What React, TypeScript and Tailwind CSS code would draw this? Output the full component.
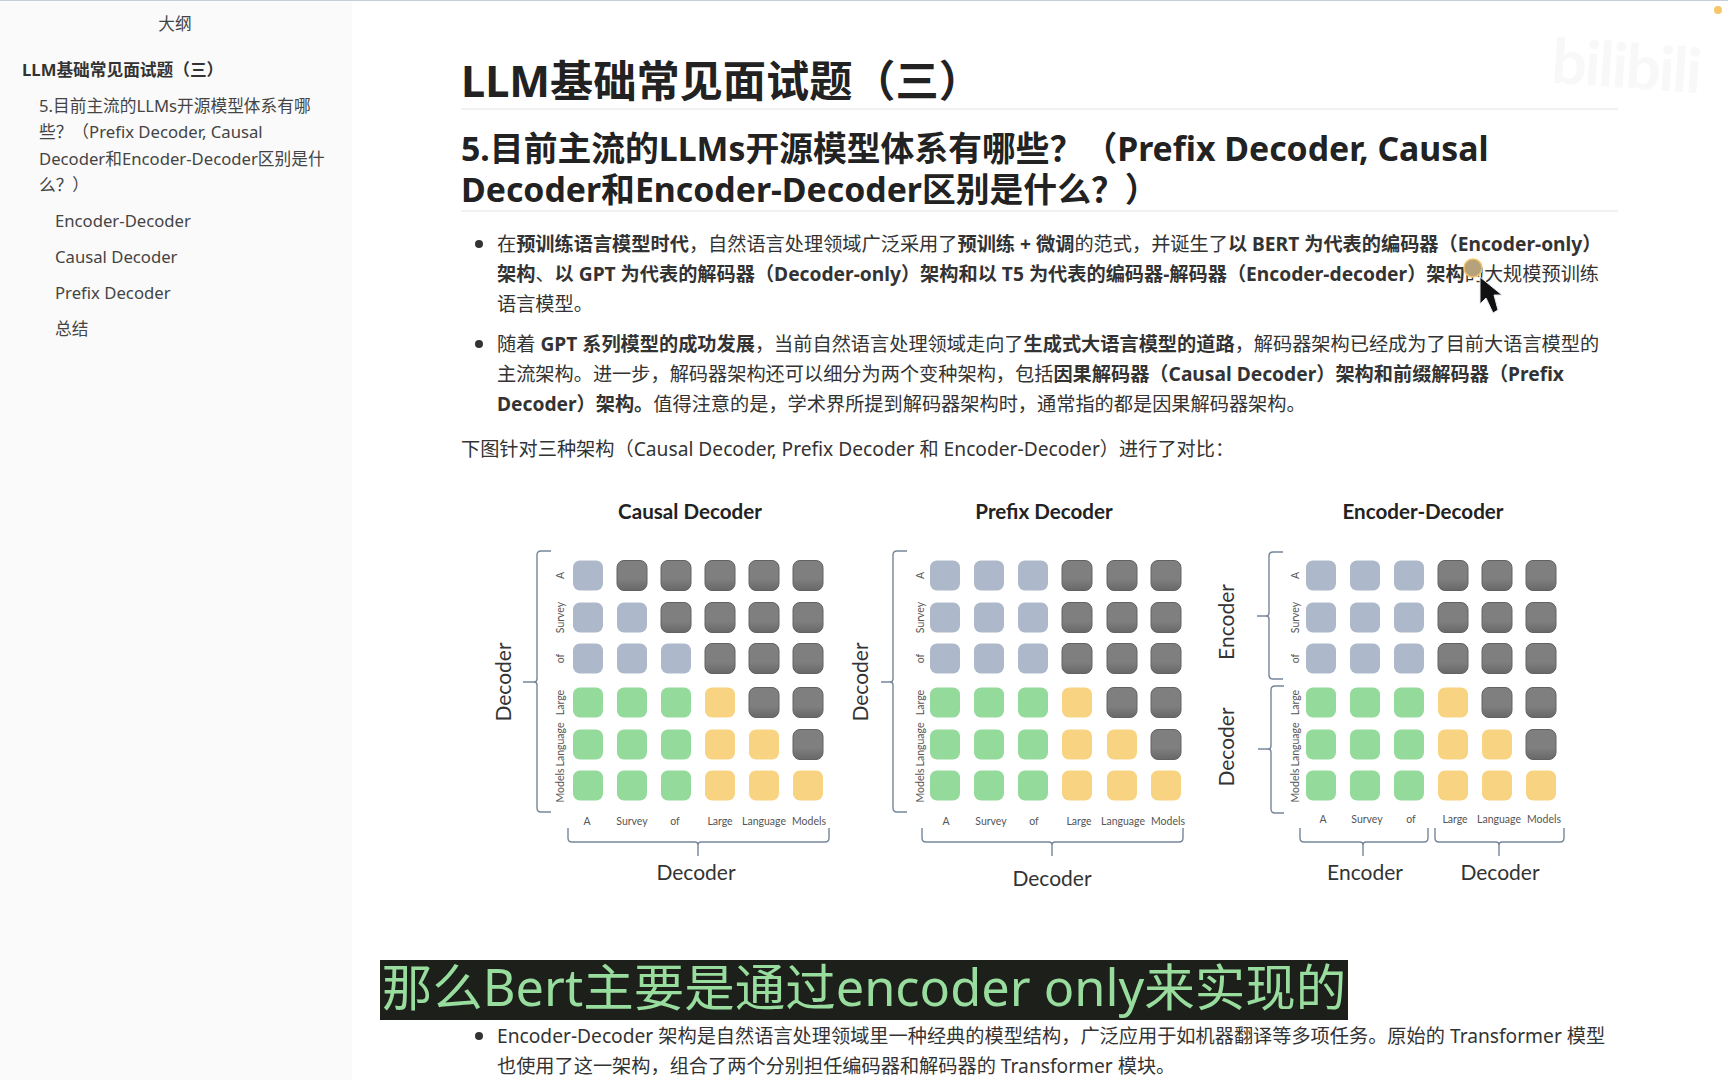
import React from 'react'

const words = ['A', 'Survey', 'of', 'Large', 'Language', 'Models']
const rowY = [560.5, 602.5, 643.5, 687.5, 729.5, 770.5]

const BLUE = '#adb9ca'
const GREEN = '#94da9a'
const YELLOW = '#f8d381'

const panels = [
  {
    title: 'Causal Decoder',
    titleX: 690,
    cols: [573, 617, 661, 705, 749, 793],
    rowLabelX: 561,
    colLabelX: [587, 632, 675, 720, 764, 809],
    colLabelY: 822,
    shared: false,
  },
  {
    title: 'Prefix Decoder',
    titleX: 1044,
    cols: [930, 974, 1018, 1062, 1107, 1151],
    rowLabelX: 921,
    colLabelX: [946, 991, 1034, 1079, 1123, 1168],
    colLabelY: 822,
    shared: true,
  },
  {
    title: 'Encoder-Decoder',
    titleX: 1423,
    cols: [1306, 1350, 1394, 1438, 1482, 1526],
    rowLabelX: 1296,
    colLabelX: [1323, 1367, 1411, 1455, 1499, 1544],
    colLabelY: 820,
    shared: true,
  },
]

const axisLabels = [
  { text: 'Decoder', x: 506, y: 682 },
  { text: 'Decoder', x: 863, y: 682 },
  { text: 'Encoder', x: 1229, y: 622 },
  { text: 'Decoder', x: 1229, y: 747 },
]

const bottomLabels = [
  { text: 'Decoder', x: 696, y: 875 },
  { text: 'Decoder', x: 1052, y: 881 },
  { text: 'Encoder', x: 1365, y: 875 },
  { text: 'Decoder', x: 1500, y: 875 },
]

const leftBraces = [
  { right: 551, left: 537, top: 551, bottom: 812, mid: 682, tip: 523 },
  { right: 907, left: 893, top: 551, bottom: 812, mid: 682, tip: 881 },
  { right: 1283, left: 1269, top: 552, bottom: 679, mid: 616, tip: 1257 },
  { right: 1284, left: 1271, top: 686, bottom: 813, mid: 749, tip: 1258 },
]

const bottomBraces = [
  { x1: 568, x2: 829, mid: 698 },
  { x1: 922, x2: 1183, mid: 1052 },
  { x1: 1300, x2: 1428, mid: 1363 },
  { x1: 1435, x2: 1564, mid: 1499 },
]

const cellFill = (r: number, c: number, shared: boolean) => {
  if (r < 3) {
    if (shared) return c < 3 ? BLUE : 'url(#grayCell)'
    return c <= r ? BLUE : 'url(#grayCell)'
  }
  if (c < 3) return GREEN
  return c <= r ? YELLOW : 'url(#grayCell)'
}

const Figure = () => (
  <svg viewBox="461 490 1157 410" className="block w-[1157px] h-[410px]">
    <defs>
      <linearGradient id="grayCell" x1="0" y1="0" x2="0" y2="1">
        <stop offset="0.62" stopColor="#7f7f7f" />
        <stop offset="1" stopColor="#686868" />
      </linearGradient>
    </defs>

    {panels.map((p) => (
      <g key={p.title}>
        <text x={p.titleX} y={514} textAnchor="middle" dominantBaseline="middle" className="font-['Lato',sans-serif] text-[20.6px] font-bold fill-[#222]">
          {p.title}
        </text>
        {rowY.map((y, r) =>
          p.cols.map((x, c) => {
            const fill = cellFill(r, c, p.shared)
            return (
              <rect
                key={`${r}-${c}`}
                x={x}
                y={y}
                width={30}
                height={30}
                rx={7}
                fill={fill}
                stroke={fill === 'url(#grayCell)' ? '#626262' : 'none'}
                strokeWidth={1}
              />
            )
          })
        )}
        {words.map((w, i) => (
          <g key={w}>
            <text
              x={p.rowLabelX}
              y={rowY[i] + 15}
              transform={`rotate(-90 ${p.rowLabelX} ${rowY[i] + 15})`}
              textAnchor="middle"
              dominantBaseline="middle"
              className="font-['Lato',sans-serif] text-[10.5px] fill-[#555]"
            >
              {w}
            </text>
            <text
              x={p.colLabelX[i]}
              y={p.colLabelY}
              textAnchor="middle"
              dominantBaseline="middle"
              className="font-['Lato',sans-serif] text-[10.5px] fill-[#555]"
            >
              {w}
            </text>
          </g>
        ))}
      </g>
    ))}

    {axisLabels.map((l) => (
      <text
        key={`${l.text}-${l.x}-${l.y}`}
        x={l.x}
        y={l.y}
        transform={`rotate(-90 ${l.x} ${l.y})`}
        textAnchor="middle"
        dominantBaseline="middle"
        className="font-['Lato',sans-serif] text-[21px] fill-[#333]"
      >
        {l.text}
      </text>
    ))}
    {bottomLabels.map((l) => (
      <text
        key={`${l.text}-${l.x}`}
        x={l.x}
        y={l.y}
        textAnchor="middle"
        dominantBaseline="middle"
        className="font-['Lato',sans-serif] text-[21px] fill-[#333]"
      >
        {l.text}
      </text>
    ))}

    <g fill="none" stroke="#76869a" strokeWidth={1.4}>
      {leftBraces.map((b) => (
        <path
          key={`${b.left}-${b.top}`}
          d={`M${b.right} ${b.top} H${b.left + 4} Q${b.left} ${b.top} ${b.left} ${b.top + 4} V${b.mid - 3} Q${b.left} ${b.mid} ${b.left - 3} ${b.mid} H${b.tip} M${b.left - 3} ${b.mid} Q${b.left} ${b.mid} ${b.left} ${b.mid + 3} V${b.bottom - 4} Q${b.left} ${b.bottom} ${b.left + 4} ${b.bottom} H${b.right}`}
        />
      ))}
      {bottomBraces.map((b) => (
        <path
          key={b.x1}
          d={`M${b.x1} 828 V838 Q${b.x1} 842 ${b.x1 + 4} 842 H${b.mid - 3} Q${b.mid} 842 ${b.mid} 845 V856 M${b.mid} 845 Q${b.mid} 842 ${b.mid + 3} 842 H${b.x2 - 4} Q${b.x2} 842 ${b.x2} 838 V828`}
        />
      ))}
    </g>
  </svg>
)

const Bullet = ({ children }: { children: React.ReactNode }) => (
  <li className="relative pl-[36px] pr-[12px]">
    <span className="absolute left-[14px] top-[11px] w-[8px] h-[8px] rounded-full bg-[#333]"></span>
    {children}
  </li>
)

const App = () => {
  return (
    <div className="relative flex h-[1080px] overflow-hidden bg-white text-[#333] font-['Noto_Sans','Noto_Sans_CJK_SC',sans-serif]">
      {/* Sidebar */}
      <aside className="w-[352px] shrink-0 bg-[#fafafa] text-[16.7px] leading-[26.4px] text-[#444]">
        <div className="pt-[11px] pr-[2px] text-center">大纲</div>
        <div className="mt-[20px] pl-[22px] font-bold text-[#333]">LLM基础常见面试题（三）</div>
        <div className="mt-[9px] pl-[39px] whitespace-nowrap">
          5.目前主流的LLMs开源模型体系有哪<br />
          些？（Prefix Decoder, Causal<br />
          Decoder和Encoder-Decoder区别是什<br />
          么？）
        </div>
        <div className="mt-[10px] pl-[55px] flex flex-col gap-[9.6px]">
          <div>Encoder-Decoder</div>
          <div>Causal Decoder</div>
          <div>Prefix Decoder</div>
          <div>总结</div>
        </div>
      </aside>

      {/* Document */}
      <main className="flex-1 pl-[109px] pr-[110px] text-[19.2px] leading-[30px]">
        <h1 className="mt-[55px] pb-[1px] text-[43.2px] leading-[52px] font-bold text-[#222] border-b-2 border-[#f2f2f2]">
          LLM基础常见面试题（三）
        </h1>
        <h2 className="mt-[18px] text-[33.8px] leading-[41px] font-bold text-[#222] border-b-2 border-[#f2f2f2]">
          5.目前主流的LLMs开源模型体系有哪些？（Prefix Decoder, Causal Decoder和Encoder-Decoder区别是什么？）
        </h2>
        <ul className="mt-[17px] flex flex-col gap-[10px]">
          <Bullet>
            在<b>预训练语言模型时代</b>，自然语言处理领域广泛采用了<b>预训练 + 微调</b>的范式，并诞生了<b>以 BERT 为代表的编码器（Encoder-only）架构</b>、<b>以 GPT 为代表的解码器（Decoder-only）架构和以 T5 为代表的编码器-解码器（Encoder-decoder）架构</b>的大规模预训练语言模型。
          </Bullet>
          <Bullet>
            随着 <b>GPT 系列模型的成功发展</b>，当前自然语言处理领域走向了<b>生成式大语言模型的道路</b>，解码器架构已经成为了目前大语言模型的主流架构。进一步，解码器架构还可以细分为两个变种架构，包括<b>因果解码器（Causal Decoder）架构和前缀解码器（Prefix Decoder）架构。</b>值得注意的是，学术界所提到解码器架构时，通常指的都是因果解码器架构。
          </Bullet>
        </ul>
        <p className="mt-[15px]">下图针对三种架构（Causal Decoder, Prefix Decoder 和 Encoder-Decoder）进行了对比：</p>
        <div className="mt-[26px]">
          <Figure />
        </div>
        <ul className="mt-[121px]">
          <Bullet>
            Encoder-Decoder 架构是自然语言处理领域里一种经典的模型结构，广泛应用于如机器翻译等多项任务。原始的 Transformer 模型也使用了这一架构，组合了两个分别担任编码器和解码器的 Transformer 模块。
          </Bullet>
        </ul>
      </main>

      {/* Video overlays */}
      <div className="absolute top-0 left-0 right-0 h-px bg-[#c6cedb]"></div>
      <div className="absolute top-[6px] left-[1714px] w-[8px] h-[8px] rounded-full bg-[#f6c768]"></div>
      <div className="absolute top-[28px] left-[1552px] rotate-[4deg] text-[62px] leading-[72px] font-bold tracking-[-2px] text-[#f8f8f8] font-['Lato',sans-serif]">
        bilibili
      </div>
      <div className="absolute left-[380px] top-[960px] w-[968px] h-[60px] pb-[8px] bg-[#1c1f1a] flex items-center justify-center whitespace-nowrap text-[50.5px] leading-[55px] text-[#98dd9e]">
        那么Bert主要是通过encoder only来实现的
      </div>
      <svg viewBox="0 0 60 70" className="absolute left-[1460px] top-[254px] w-[60px] h-[70px]">
        <circle cx="13" cy="14" r="9" fill="#b5a27a" stroke="#f0c468" strokeWidth="1.5" />
        <path d="M20 23 L20 50 L26 44 L33 59 L38 56 L34 41 L42 41 Z" fill="#111" stroke="#e6eaf0" strokeWidth="1" />
      </svg>
    </div>
  )
}

export default App
